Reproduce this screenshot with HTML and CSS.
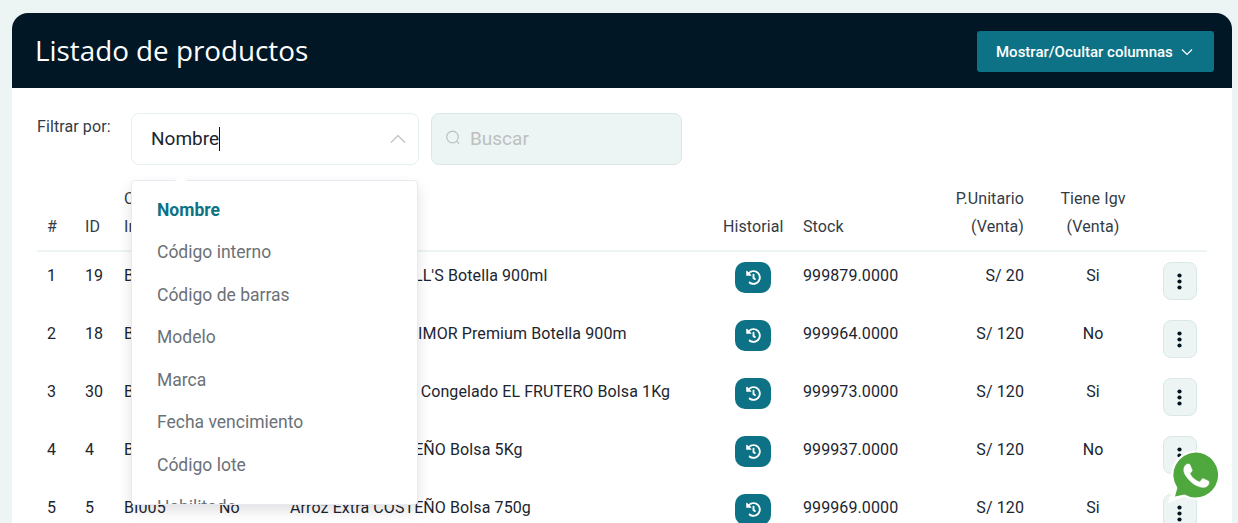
FILE: index.html
```html
<!DOCTYPE html>
<html lang="es">
<head>
    <meta charset="UTF-8">
    <meta name="viewport" content="width=device-width, initial-scale=1.0">
    <title>Listado de productos</title>
    <link rel="stylesheet" href="styles.css">
</head>
<body>
    <svg class="icon-defs" width="0" height="0">
        <symbol id="icon-history" viewBox="0 0 512 512">
            <path d="M504 255.531c.253 136.64-111.18 248.372-247.82 248.468-59.015.042-113.223-20.53-155.822-54.911-11.077-8.94-11.905-25.541-1.839-35.607l11.267-11.267c8.609-8.609 22.353-9.551 31.891-1.984C173.062 425.135 212.781 440 256 440c101.705 0 184-82.311 184-184 0-101.705-82.311-184-184-184-48.814 0-93.149 18.969-126.068 49.932l50.754 50.754c10.08 10.08 2.941 27.314-11.313 27.314H24c-8.837 0-16-7.163-16-16V38.627c0-14.254 17.234-21.393 27.314-11.314l49.372 49.372C129.209 34.136 189.552 8 256 8c136.81 0 247.747 110.78 248 247.531zm-180.912 78.784l9.823-12.63c8.138-10.463 6.253-25.542-4.21-33.679L288 256.349V152c0-13.255-10.745-24-24-24h-16c-13.255 0-24 10.745-24 24v135.651l65.409 50.874c10.463 8.137 25.541 6.253 33.679-4.21z"/>
        </symbol>
        <symbol id="icon-kebab" viewBox="0 0 5 17">
            <circle cx="2.500" cy="2.500" r="2.100"/>
            <circle cx="2.500" cy="8.500" r="2.100"/>
            <circle cx="2.500" cy="14.500" r="2.100"/>
        </symbol>
    </svg>

    <main class="card">
        <header class="card-header">
            <h1>Listado de productos</h1>
            <button class="btn-columns" type="button">
                Mostrar/Ocultar columnas
                <svg width="14" height="14" viewBox="0 0 14 14" fill="none" stroke="currentColor" stroke-width="1.2"><path d="M2 4.500l5 5 5-5"/></svg>
            </button>
        </header>

        <section class="card-body">
            <div class="filters">
                <span class="filter-label">Filtrar por:</span>
                <div class="select">
                    <div class="select-box">
                        <span class="select-value">Nombre</span>
                        <svg width="16" height="16" viewBox="0 0 16 16" fill="none" stroke="#b9bec4" stroke-width="1.1"><path d="M1 11.500l7-7 7 7"/></svg>
                    </div>
                    <div class="menu">
                        <span class="menu-arrow"></span>
                        <ul class="menu-list">
                            <li class="active">Nombre</li>
                            <li>Código interno</li>
                            <li>Código de barras</li>
                            <li>Modelo</li>
                            <li>Marca</li>
                            <li>Fecha vencimiento</li>
                            <li>Código lote</li>
                            <li>Habilitado</li>
                        </ul>
                    </div>
                </div>
                <div class="search">
                    <svg width="16" height="16" viewBox="0 0 16 16" fill="none" stroke="#b9c2c4" stroke-width="1.2"><circle cx="7.500" cy="7" r="5.800"/><path d="M11.800 11.300l2.400 2.400"/></svg>
                    <span>Buscar</span>
                </div>
            </div>

            <table class="products">
                <colgroup>
                    <col class="c-num"><col class="c-id"><col class="c-code"><col class="c-flag"><col class="c-name">
                    <col class="c-hist"><col class="c-stock"><col class="c-price"><col class="c-igv"><col class="c-act">
                </colgroup>
                <thead>
                    <tr>
                        <th>#</th>
                        <th>ID</th>
                        <th>Código<br>Interno</th>
                        <th></th>
                        <th>Nombre</th>
                        <th class="center">Historial</th>
                        <th>Stock</th>
                        <th class="right">P.Unitario<br>(Venta)</th>
                        <th class="center">Tiene Igv<br>(Venta)</th>
                        <th></th>
                    </tr>
                </thead>
                <tbody>
                    <tr>
                        <td>1</td><td>19</td><td>BI019</td><td>No</td>
                        <td>Aceite Vegetal HILL'S Botella 900ml</td>
                        <td class="center"><button class="btn-history" type="button"><svg width="15" height="15" fill="#fff"><use href="#icon-history"/></svg></button></td>
                        <td>999879.0000</td><td class="right">S/ 20</td><td class="center">Si</td>
                        <td class="center"><button class="btn-more" type="button"><svg width="5" height="17"><use href="#icon-kebab"/></svg></button></td>
                    </tr>
                    <tr>
                        <td>2</td><td>18</td><td>BI018</td><td>No</td>
                        <td>Aceite Vegetal PRIMOR Premium Botella 900m</td>
                        <td class="center"><button class="btn-history" type="button"><svg width="15" height="15" fill="#fff"><use href="#icon-history"/></svg></button></td>
                        <td>999964.0000</td><td class="right">S/ 120</td><td class="center">No</td>
                        <td class="center"><button class="btn-more" type="button"><svg width="5" height="17"><use href="#icon-kebab"/></svg></button></td>
                    </tr>
                    <tr>
                        <td>3</td><td>30</td><td>BI030</td><td>No</td>
                        <td>Pulpa de Durazno Congelado EL FRUTERO Bolsa 1Kg</td>
                        <td class="center"><button class="btn-history" type="button"><svg width="15" height="15" fill="#fff"><use href="#icon-history"/></svg></button></td>
                        <td>999973.0000</td><td class="right">S/ 120</td><td class="center">Si</td>
                        <td class="center"><button class="btn-more" type="button"><svg width="5" height="17"><use href="#icon-kebab"/></svg></button></td>
                    </tr>
                    <tr>
                        <td>4</td><td>4</td><td>BI004</td><td>No</td>
                        <td>Arroz Extra COSTEÑO Bolsa 5Kg</td>
                        <td class="center"><button class="btn-history" type="button"><svg width="15" height="15" fill="#fff"><use href="#icon-history"/></svg></button></td>
                        <td>999937.0000</td><td class="right">S/ 120</td><td class="center">No</td>
                        <td class="center"><button class="btn-more" type="button"><svg width="5" height="17"><use href="#icon-kebab"/></svg></button></td>
                    </tr>
                    <tr>
                        <td>5</td><td>5</td><td>BI005</td><td>No</td>
                        <td>Arroz Extra COSTEÑO Bolsa 750g</td>
                        <td class="center"><button class="btn-history" type="button"><svg width="15" height="15" fill="#fff"><use href="#icon-history"/></svg></button></td>
                        <td>999969.0000</td><td class="right">S/ 120</td><td class="center">Si</td>
                        <td class="center"><button class="btn-more" type="button"><svg width="5" height="17"><use href="#icon-kebab"/></svg></button></td>
                    </tr>
                </tbody>
            </table>
        </section>
    </main>

    <a class="whatsapp" href="#" aria-label="WhatsApp">
        <svg width="54" height="54" viewBox="0 0 54 54">
            <path fill="#fff" d="M28.500.500a24.500 24.500 0 1 1-11.200 46.300L1 53l5.400-17.500A24.500 24.500 0 0 1 28.500.500z"/>
            <path fill="#4fa83d" d="M28.500 2.500a22.500 22.500 0 1 1-11 42.100L8 46.500l2.400-8.700A22.500 22.500 0 0 1 28.500 2.500z"/>
            <g transform="translate(4.100 .5) scale(2.100)">
                <path fill="#fff" stroke="#fff" stroke-width=".2" d="M17.472 14.382c-.297-.149-1.758-.867-2.030-.967-.273-.099-.471-.148-.670.150-.197.297-.767.966-.940 1.164-.173.199-.347.223-.644.075-.297-.150-1.255-.463-2.390-1.475-.883-.788-1.480-1.761-1.653-2.059-.173-.297-.018-.458.130-.606.134-.133.298-.347.446-.520.149-.174.198-.298.298-.497.099-.198.050-.371-.025-.520-.075-.149-.669-1.612-.916-2.207-.242-.579-.487-.500-.669-.510-.173-.008-.371-.010-.570-.010-.198 0-.520.074-.792.372-.272.297-1.040 1.016-1.040 2.479 0 1.462 1.065 2.875 1.213 3.074.149.198 2.096 3.200 5.077 4.487.709.306 1.262.489 1.694.625.712.227 1.360.195 1.871.118.571-.085 1.758-.719 2.006-1.413.248-.694.248-1.289.173-1.413-.074-.124-.272-.198-.570-.347z"/>
            </g>
        </svg>
    </a>
</body>
</html>
```

FILE: styles.css
```css
/* Base */
* {
    box-sizing: border-box;
}

html, body {
    height: 100%;
}

body {
    margin: 0;
    padding: 13px 6px 0 12px;
    overflow: hidden;
    background: #ecf5f4;
    color: #1b2530;
    font-family: 'Roboto', sans-serif;
    font-size: 16px;
}

.icon-defs {
    position: absolute;
}

/* Card */
.card {
    background: white;
    border-radius: 16px 16px 0 0;
    height: 600px;
}

.card-header {
    display: flex;
    align-items: flex-start;
    justify-content: space-between;
    height: 75px;
    padding: 18px 18px 0 23px;
    background: #011725;
    border-radius: 16px 16px 0 0;
}

.card-header h1 {
    margin: 0;
    color: white;
    font-family: 'Open Sans', sans-serif;
    font-size: 27.800px;
    font-weight: 400;
    line-height: 38px;
}

.btn-columns {
    display: flex;
    align-items: center;
    gap: 7px;
    width: 237px;
    height: 41px;
    padding: 0 0 0 19px;
    border: none;
    border-radius: 3px;
    background: #0d7285;
    color: white;
    font-family: inherit;
    font-size: 15px;
    font-weight: 500;
}

.card-body {
    padding: 25px 25px 0;
}

/* Filters */
.filters {
    display: flex;
    align-items: flex-start;
    height: 68px;
}

.filter-label {
    width: 94px;
    padding-top: 4px;
    color: #333c45;
    letter-spacing: 0.1px;
}

.select {
    position: relative;
    width: 288px;
    margin-right: 12px;
}

.select-box {
    display: flex;
    align-items: center;
    justify-content: space-between;
    height: 52px;
    padding: 0 12px 0 19px;
    border: 1px solid #e6f0ef;
    border-radius: 8px;
}

.select-value {
    border-right: 1px solid #111;
    color: #1b2530;
    font-size: 19px;
    line-height: 24px;
}

.menu {
    position: absolute;
    top: 67px;
    left: 0;
    z-index: 5;
    width: 287px;
    height: 325px;
    background: white;
    border: 1px solid #e7eaf0;
    border-radius: 4px;
    box-shadow: 0 6px 14px rgba(0, 0, 0, 0.12);
}

.menu-arrow {
    position: absolute;
    top: -6px;
    left: 43px;
    width: 0;
    height: 0;
    border-left: 6px solid transparent;
    border-right: 6px solid transparent;
    border-bottom: 6px solid white;
}

.menu-list {
    height: 100%;
    margin: 0;
    padding: 7.700px 0 0 25px;
    overflow: hidden;
    list-style: none;
    color: #6b7177;
    font-size: 17.500px;
}

.menu-list li {
    height: 42.500px;
    line-height: 42.500px;
}

.menu-list .active {
    color: #0d7285;
    font-weight: 700;
}

.search {
    display: flex;
    align-items: center;
    gap: 9px;
    width: 251px;
    height: 52px;
    padding: 0 0 2px 13px;
    background: #edf5f4;
    border: 1px solid #d9e8e6;
    border-radius: 8px;
    color: #bdbfc1;
    font-size: 19px;
}

/* Table */
.products {
    width: 1170px;
    border-collapse: separate;
    border-spacing: 0;
    table-layout: fixed;
    letter-spacing: 0.1px;
}

.c-num { width: 38px; }
.c-id { width: 39px; }
.c-code { width: 95px; }
.c-flag { width: 71px; }
.c-name { width: 433px; }
.c-hist { width: 80px; }
.c-stock { width: 151px; }
.c-price { width: 90px; }
.c-igv { width: 118px; }
.c-act { width: 55px; }

.products th,
.products td {
    padding: 0 10px;
    text-align: left;
    white-space: nowrap;
    overflow: hidden;
}

.products th {
    height: 71px;
    padding-bottom: 9px;
    border-bottom: 2px solid #ecf5f4;
    color: #333c45;
    font-weight: 400;
    line-height: 28px;
    vertical-align: bottom;
}

.products td {
    height: 58px;
    padding-top: 10px;
    vertical-align: top;
    line-height: 28px;
}

.products .center {
    text-align: center;
}

.products .right {
    text-align: right;
}

.btn-history {
    display: inline-flex;
    align-items: center;
    justify-content: center;
    width: 36px;
    height: 31px;
    padding: 0;
    border: none;
    border-radius: 10px;
    background: #0d7285;
}

.btn-more {
    display: inline-flex;
    align-items: center;
    justify-content: center;
    width: 34px;
    height: 38px;
    padding: 0;
    border: 1px solid #d9e8e6;
    border-radius: 8px;
    background: #edf5f4;
    fill: #01141f;
}

/* WhatsApp */
.whatsapp {
    position: fixed;
    left: 1167px;
    top: 450px;
    z-index: 10;
    line-height: 0;
}
```
